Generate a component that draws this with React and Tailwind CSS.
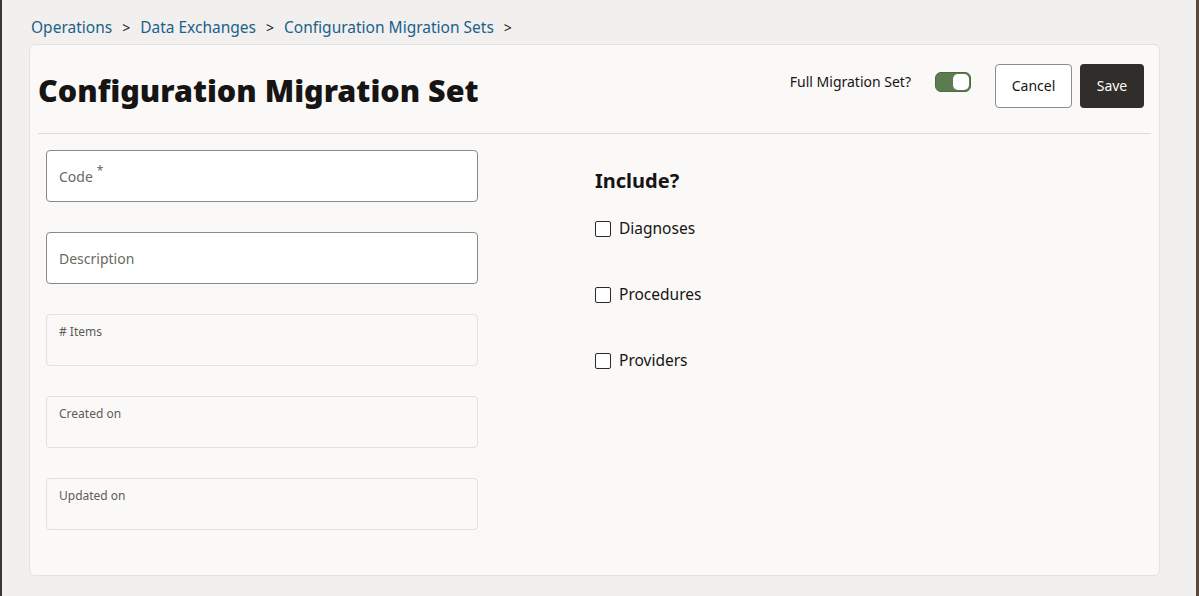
export default function App() {
    const readOnlyFields = ['# Items', 'Created on', 'Updated on'];
    const includes = ['Diagnoses', 'Procedures', 'Providers'];

    return (
        <div
            className="w-[1199px] h-[596px] bg-[#f1f0ef] border-l-2 border-r-[3px] border-l-[#3a3632] border-r-[#5a4a3a] overflow-hidden"
            style={{ fontFamily: '"Noto Sans", "Open Sans", sans-serif' }}
        >
            <div className="pl-[27px] pr-[36px]">
                {/* Breadcrumb */}
                <nav className="h-[44px] pt-[12px] pl-[2px] flex items-center gap-[10px] text-[15.5px] text-[#1b6189] leading-none">
                    <span>Operations</span>
                    <span className="text-[#161513] text-[14px]">&gt;</span>
                    <span>Data Exchanges</span>
                    <span className="text-[#161513] text-[14px]">&gt;</span>
                    <span>Configuration Migration Sets</span>
                    <span className="text-[#161513] text-[14px]">&gt;</span>
                </nav>

                {/* Card */}
                <div className="h-[532px] bg-[#faf9f8] border border-[#e4e2e0] rounded-[6px] px-[8px]">
                    <div className="h-[89px] flex items-center justify-between border-b border-[#dedcda]">
                        <h1 className="text-[30.5px] font-black text-[#161513] pt-[3px]">
                            Configuration Migration Set
                        </h1>
                        <div className="flex items-center pb-[7px] mr-[7px]">
                            <span className="text-[14px] text-[#161513] mr-[24px] -mt-[8px]">Full Migration Set?</span>
                            <div className="w-[36px] h-[20px] rounded-[6px] bg-[#5c7b50] border border-[#4c6a42] relative mr-[24px] -mt-[8px]">
                                <div className="absolute right-[1px] top-[1px] w-[16px] h-[16px] rounded-[5px] bg-white" />
                            </div>
                            <button className="w-[77px] h-[44px] rounded-[4px] border border-[#8f8b87] bg-white text-[14px] text-[#161513] mr-[8px]">
                                Cancel
                            </button>
                            <button className="w-[64px] h-[44px] rounded-[4px] bg-[#312d2a] text-[14px] text-white">
                                Save
                            </button>
                        </div>
                    </div>

                    <div className="flex pt-[16px]">
                        <div className="w-[432px] ml-[8px] flex flex-col gap-[30px]">
                            {['Code', 'Description'].map((label) => (
                                <div
                                    key={label}
                                    className="h-[52px] bg-white border border-[#8c8884] rounded-[4px] flex items-center px-[12px] text-[14px] text-[#6b6762]"
                                >
                                    {label}
                                    {label === 'Code' && <span className="ml-[4px] -mt-[10px] text-[12px]">*</span>}
                                </div>
                            ))}
                            {readOnlyFields.map((label) => (
                                <div
                                    key={label}
                                    className="h-[52px] border border-[#e2e0dd] rounded-[4px] px-[12px] pt-[8px] text-[12px] text-[#5f5b57]"
                                >
                                    {label}
                                </div>
                            ))}
                        </div>

                        <div className="ml-[117px] pt-[16px]">
                            <h2 className="text-[20px] font-bold text-[#161513] mb-[22px]">Include?</h2>
                            <div className="flex flex-col gap-[44px]">
                                {includes.map((item) => (
                                    <label key={item} className="flex items-center gap-[8px] text-[15.5px] text-[#161513] h-[22px]">
                                        <span className="w-[16px] h-[16px] border-[1.5px] border-[#2b2825] rounded-[2px] bg-white" />
                                        {item}
                                    </label>
                                ))}
                            </div>
                        </div>
                    </div>
                </div>
            </div>
        </div>
    );
}
